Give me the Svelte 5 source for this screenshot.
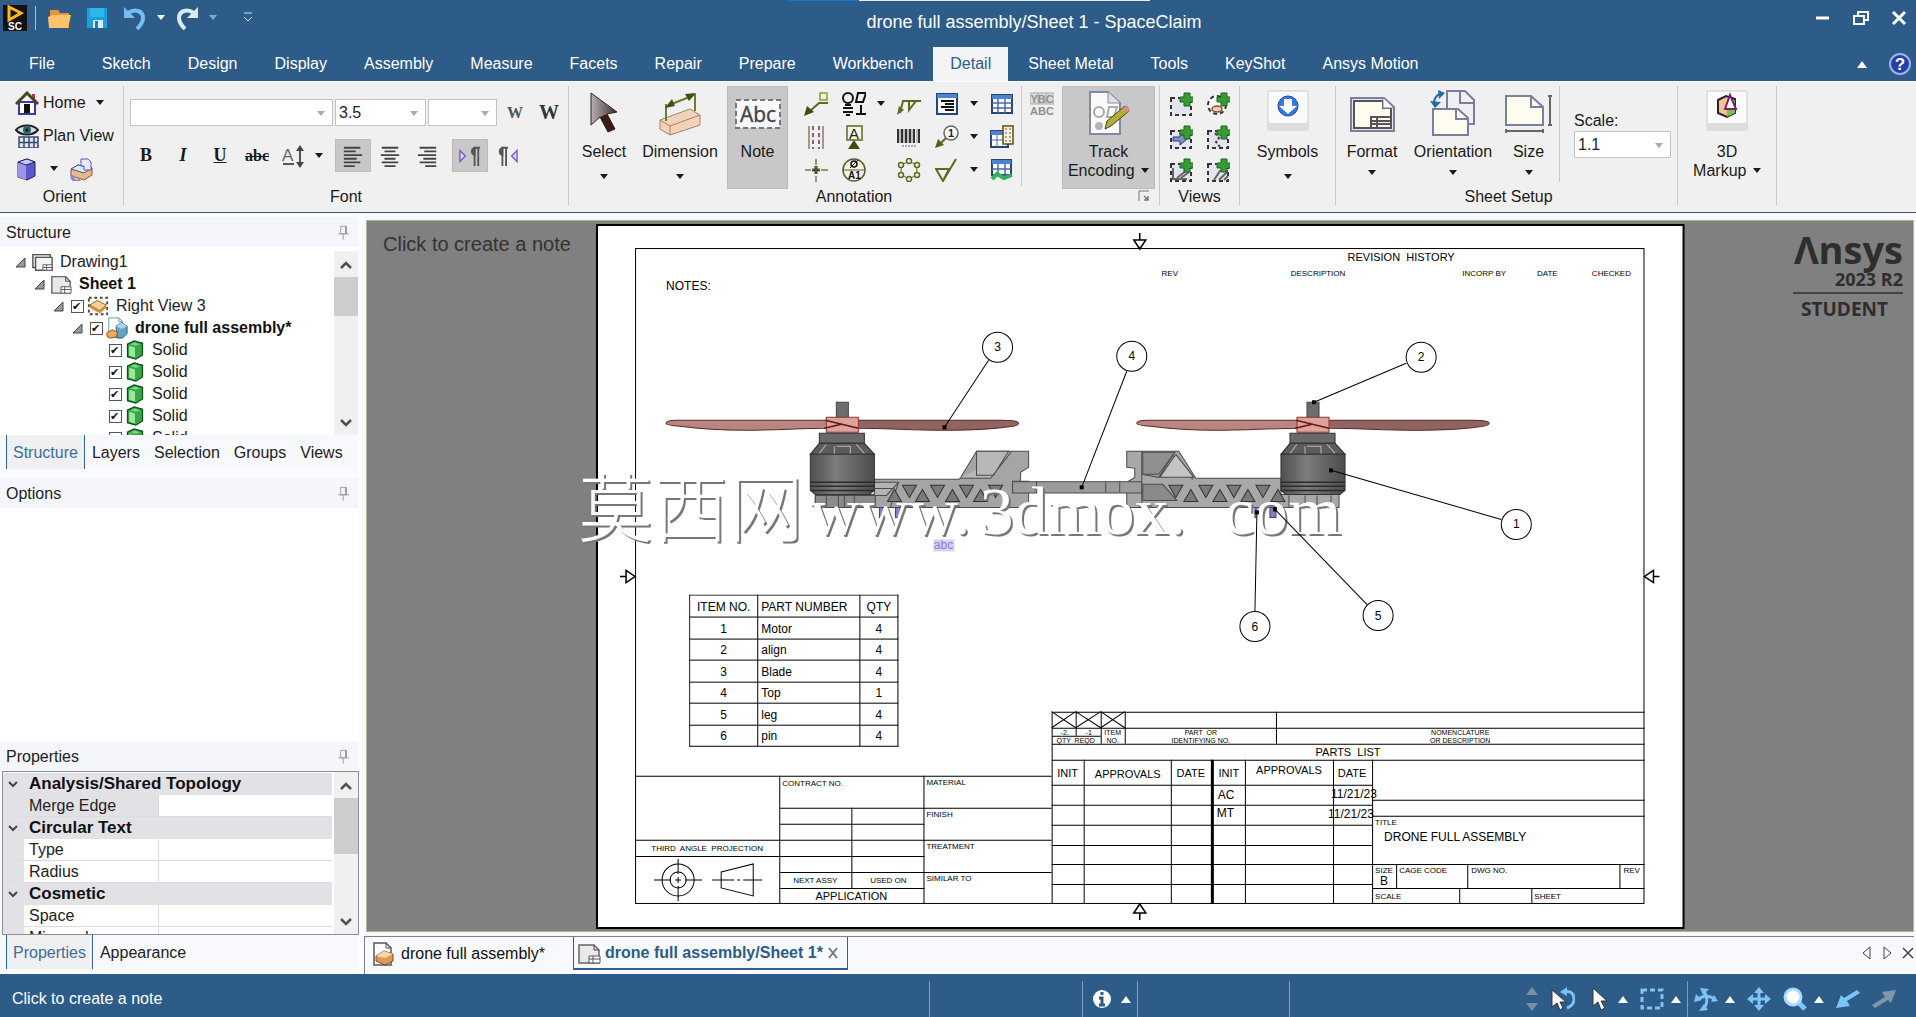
<script lang="ts">
  const ribbonTabs = [
    "Sketch", "Design", "Display", "Assembly", "Measure", "Facets", "Repair", "Prepare",
    "Workbench", "Detail", "Sheet Metal", "Tools", "KeyShot", "Ansys Motion",
  ];

  const tree = [
    { level: 0, icon: "drawing", text: "Drawing1", open: true },
    { level: 1, icon: "sheet", text: "Sheet 1", open: true, bold: true },
    { level: 2, icon: "view", text: "Right View 3", open: true, check: true },
    { level: 3, icon: "part", text: "drone full assembly*", open: true, check: true, bold: true },
    { level: 4, icon: "solid", text: "Solid", check: true },
    { level: 4, icon: "solid", text: "Solid", check: true },
    { level: 4, icon: "solid", text: "Solid", check: true },
    { level: 4, icon: "solid", text: "Solid", check: true },
    { level: 4, icon: "solid", text: "Solid", check: true },
  ];

  const properties = [
    { category: "Analysis/Shared Topology" },
    { name: "Merge Edge", selected: true },
    { category: "Circular Text" },
    { name: "Type" },
    { name: "Radius" },
    { category: "Cosmetic" },
    { name: "Space" },
    { name: "Mirrored" },
  ];

  const parts = [
    ["1", "Motor", "4"],
    ["2", "align", "4"],
    ["3", "Blade", "4"],
    ["4", "Top", "1"],
    ["5", "leg", "4"],
    ["6", "pin", "4"],
  ];

  const annotationTools = [
    ["noteLeader", "Note leader"], ["gdt", "Geometric tolerance"], ["caret", "More tolerances"],
    ["weld", "Weld symbol"], ["table", "Table"], ["caret", "More tables"], ["gridTable", "Bill of materials"],
    ["centerlines", "Centerlines"], ["datum", "Datum symbol"], ["", ""],
    ["barcode", "Barcode"], ["balloon", "Balloon"], ["caret", "More balloons"], ["holeTable", "Hole table"],
    ["centerMark", "Center mark"], ["datumTarget", "Datum target"], ["", ""],
    ["boltCircle", "Bolt circle"], ["finish", "Surface finish"], ["caret", "More finishes"], ["bendTable", "Bend table"],
  ];

  const viewTools = [
    ["viewGeneral", "General view"], ["viewDetail", "Detail view"],
    ["viewProjected", "Projected view"], ["viewBroken", "Broken view"],
    ["viewSection", "Section view"], ["viewBreakout", "Breakout view"],
  ];

  const balloons = [
    { n: 3, x: 999, y: 347, from: [990, 360], to: [946, 427] },
    { n: 4, x: 1133, y: 356, from: [1128, 371], to: [1083, 487] },
    { n: 2, x: 1422, y: 357, from: [1407, 363], to: [1315, 402] },
    { n: 1, x: 1517, y: 524, from: [1502, 519], to: [1332, 470] },
    { n: 5, x: 1379, y: 615, from: [1368, 604], to: [1276, 509] },
    { n: 6, x: 1256, y: 626, from: [1256, 611], to: [1258, 512] },
  ];

  // text on the drawing sheet: x, baseline, size, anchor, content
  const labels: [number, number, number, string, string][] = [
    [1402, 261, 11, "middle", "REVISION  HISTORY"],
    [1171, 276, 8, "middle", "REV"],
    [1319, 276, 8, "middle", "DESCRIPTION"],
    [1485, 276, 8, "middle", "INCORP BY"],
    [1548, 276, 8, "middle", "DATE"],
    [1612, 276, 8, "middle", "CHECKED"],
    [668, 290, 12, "start", "NOTES:"],
    [784, 785, 8, "start", "CONTRACT NO."],
    [928, 784, 8, "start", "MATERIAL"],
    [928, 816, 8, "start", "FINISH"],
    [928, 848, 8, "start", "TREATMENT"],
    [928, 880, 8, "start", "SIMILAR TO"],
    [709, 850, 8, "middle", "THIRD  ANGLE  PROJECTION"],
    [817, 882, 8, "middle", "NEXT ASSY"],
    [890, 882, 8, "middle", "USED ON"],
    [853, 899, 11, "middle", "APPLICATION"],
    [1066, 734, 7, "middle", "-2."],
    [1090, 734, 7, "middle", "-1"],
    [1114, 734, 7, "middle", "ITEM"],
    [1077, 742, 7, "middle", "QTY  REQD"],
    [1114, 742, 7, "middle", "NO."],
    [1202, 734, 7, "middle", "PART  OR"],
    [1202, 742, 7, "middle", "IDENTIFYING NO."],
    [1461, 734, 7, "middle", "NOMENCLATURE"],
    [1461, 742, 7, "middle", "OR DESCRIPTION"],
    [1349, 755, 11, "middle", "PARTS  LIST"],
    [1069, 776, 11, "middle", "INIT"],
    [1129, 777, 11, "middle", "APPROVALS"],
    [1192, 776, 11, "middle", "DATE"],
    [1230, 776, 11, "middle", "INIT"],
    [1290, 773, 11, "middle", "APPROVALS"],
    [1353, 776, 11, "middle", "DATE"],
    [1219, 798, 12, "start", "AC"],
    [1218, 816, 12, "start", "MT"],
    [1332, 797, 12, "start", "11/21/23"],
    [1329, 817, 12, "start", "11/21/23"],
    [1376, 824, 8, "start", "TITLE"],
    [1385, 840, 12, "start", "DRONE FULL ASSEMBLY"],
    [1376, 872, 8, "start", "SIZE"],
    [1381, 884, 12, "start", "B"],
    [1400, 872, 8, "start", "CAGE CODE"],
    [1472, 872, 8, "start", "DWG NO."],
    [1624, 872, 8, "start", "REV"],
    [1376, 898, 8, "start", "SCALE"],
    [1535, 898, 8, "start", "SHEET"],
  ];

  const downCells = [911, 939, 968, 997, 1177, 1207, 1235, 1264];
  const upCells = [896, 924, 954, 982, 1192, 1221, 1249, 1279];

  const plus = `<path d="M15 1h6v4h4v5h-4v4h-6v-4h-4V5h4z" fill="#3b9a35" stroke="#1c6420"/>`;
  const dashed = `<path d="M2 6h20v17H2z" fill="#e4e3f0" stroke="#333" stroke-width="2" stroke-dasharray="4 3"/>`;
  const pageFill = "#fdfcef";

  const icons: Record<string, string> = {
    folder: `<path d="M3 4h8l2 3h9v15H3z" fill="#e8953a"/><path d="M1 11l5-2h18l-3 13H2z" fill="#ffc46a"/>`,
    save: `<path d="M2 2h20v20H2z" fill="#1aa0dc"/><path d="M5 2h14v9H5z" fill="#2db6ec"/><path d="M8 14h10v8H8z" fill="#d6f0fb"/><path d="M10 15h3v7h-3z" fill="#1583b8"/>`,
    undo: `<path d="M5 7c7-5 15-2 15 5 0 5-3 8-6 11" fill="none" stroke="#76bdf5" stroke-width="4"/><path d="M1 1v11h11z" fill="#76bdf5"/>`,
    redo: `<path d="M19 7C12 2 4 5 4 12c0 5 3 8 6 11" fill="none" stroke="#dbe9f4" stroke-width="4"/><path d="M23 1v11H12z" fill="#dbe9f4"/>`,
    home: `<path d="M4 11h16v12H4z" fill="#fff" stroke="#3c3a9c" stroke-width="2"/><path d="M17 3h3v6h-3z" fill="#c33"/><path d="M1 13L12 2l11 11" fill="none" stroke="#404a1c" stroke-width="3"/><path d="M9 13h6v9H9z" fill="#111"/>`,
    plan: `<path d="M1 6c5-6 17-6 22 0-5 6-17 6-22 0z" fill="#cfe0e0" stroke="#222" stroke-width="2"/><circle cx="12" cy="6" r="4" fill="#2a6670"/><circle cx="12" cy="6" r="1.5" fill="#111"/><path d="M4 13h19v11H4z" fill="#dfe4ef"/><path d="M4 13h19v11H4zM9 13v11M14 13v11M19 13v11M4 18.500h19" fill="none" stroke="#3a4770" stroke-width="1.500"/>`,
    cube: `<path d="M3 5l9-3 8 3v14l-8 4-9-3z" fill="#5b57c8" stroke="#23206e"/><path d="M3 5l8 3v15l-8-3z" fill="#9a98e6"/><path d="M3 5l9-3 8 3-9 3z" fill="#c9c8f4" stroke="#23206e"/>`,
    orientView: `<path d="M2 12l7-4 14 3v7l-8 5-13-4z" fill="#e9b98a" stroke="#7e5b35"/><path d="M2 12l7-4 14 3-8 5z" fill="#cfeef5" stroke="#557"/><path d="M12 2h7l3 3v8h-7v-4h-3z" fill="#eceaff" stroke="#5a55b0"/><path d="M3 18a5 5 0 0 0 8 5" fill="none" stroke="#8a86d8" stroke-width="3"/>`,
    lineSpace: `<text x="0" y="17" font-size="17" fill="#666" font-family="Liberation Sans">A</text><path d="M1 20h11M18 5v15" stroke="#555" stroke-width="2"/><path d="M14 7l4-6 4 6zM14 18l4 6 4-6z" fill="#444"/>`,
    alignLeft: `<path d="M2 3h18M2 7h13M2 11h20M2 15h14M2 19h18M2 23h12" stroke="#444" stroke-width="2"/>`,
    alignCenter: `<path d="M3 3h18M6 7h12M2 11h20M6 15h12M3 19h18M6 23h12" stroke="#444" stroke-width="2"/>`,
    alignRight: `<path d="M4 3h18M9 7h13M2 11h20M8 15h14M4 19h18M10 23h12" stroke="#444" stroke-width="2"/>`,
    ltr: `<path d="M1 6l6 6-6 6z" fill="#dcd6f5" stroke="#7b5bc0" stroke-width="1.500"/><path d="M17 23V3h6M21 3v20" fill="none" stroke="#555" stroke-width="2"/><path d="M18 2v10a5 5 0 0 1 0-10z" fill="#555"/>`,
    rtl: `<path d="M23 6l-6 6 6 6z" fill="#dcd6f5" stroke="#7b5bc0" stroke-width="1.500"/><path d="M7 23V3h6M11 3v20" fill="none" stroke="#555" stroke-width="2"/><path d="M8 2v10a5 5 0 0 1 0-10z" fill="#555"/>`,
    noteLeader: `<path d="M16 1h7v7h-7z" fill="#eef3d0" stroke="#8a9a3a" stroke-width="1.500"/><path d="M24 11h-9l-9 8" fill="none" stroke="#5d6a20" stroke-width="2"/><path d="M0 24l3-10 7 6z" fill="#414a12"/>`,
    gdt: `<circle cx="6" cy="6" r="5" fill="none" stroke="#111" stroke-width="2"/><path d="M16 1h8l-3 9h-7zM1 16h10M1 20h10M3 13h6M4 23h4M14 22h10M19 22v-9" fill="none" stroke="#111" stroke-width="2"/>`,
    weld: `<path d="M24 9H6L3 21M12 9v9l7-9" fill="none" stroke="#5d6a20" stroke-width="2"/><path d="M0 23l2-9 5 4z" fill="#5d6a20"/>`,
    table: `<path d="M2 2h20v20H2z" fill="#fff" stroke="#27457a" stroke-width="2"/><path d="M2 2h20v4H2z" fill="#4d82d4"/><path d="M6 9h13M10 12h9M6 15h13M10 18h9" stroke="#111" stroke-width="2"/>`,
    gridTable: `<path d="M2 3h20v18H2z" fill="#fff" stroke="#27457a" stroke-width="2"/><path d="M2 3h20v4H2z" fill="#4d82d4"/><path d="M2 11h20M2 16h20M8 7v14M15 7v14" stroke="#4a6aa8" stroke-width="1.500"/>`,
    centerlines: `<path d="M5 1v23M19 1v23" stroke="#8a7a66" stroke-width="1.500"/><path d="M9 1v23M15 1v23" stroke="#93606a" stroke-width="2" stroke-dasharray="4 3"/>`,
    datum: `<path d="M5 1h15v14H5z" fill="#f6f6e4" stroke="#5d6a20" stroke-width="1.500"/><text x="7" y="14" font-size="15" fill="#222" font-family="Liberation Sans">A</text><path d="M12 15l6 9H6z" fill="#414a12"/>`,
    barcode: `<path d="M1 4v14M5 4v14M9 4v14M13 4v14M17 4v14M22 4v14" stroke="#333" stroke-width="2"/><path d="M3 4v14M7 4v14M11 4v14M15 4v14M20 4v14" stroke="#888"/><path d="M5 21h14" stroke="#aaa" stroke-width="2" stroke-dasharray="2 1"/>`,
    balloon: `<circle cx="16" cy="8" r="7" fill="#fff" stroke="#666" stroke-width="1.500"/><text x="13" y="12" font-size="11" font-weight="bold" fill="#222">1</text><path d="M11 13l-6 6" stroke="#5d6a20" stroke-width="2"/><path d="M0 23l3-9 6 6z" fill="#54601c"/>`,
    holeTable: `<path d="M1 6h17v16H1z" fill="#fff" stroke="#27457a" stroke-width="2"/><path d="M1 6h17v4H1z" fill="#4d82d4"/><path d="M1 15h17M7 10v12" stroke="#4a6aa8"/><path d="M13 1h10v18H13z" fill="#fbf4d8" stroke="#5b4a14" stroke-width="1.500"/><path d="M16 3v14M20 3v14" stroke="#555" stroke-dasharray="2 2"/>`,
    centerMark: `<path d="M12 1v6M12 18v6M1 12h6M17 12h7" stroke="#8a9a7a" stroke-width="2"/><path d="M12 8v8M8 12h8" stroke="#4a5a2a" stroke-width="3"/>`,
    datumTarget: `<circle cx="12" cy="12" r="11" fill="#f5f5e6" stroke="#555d2a" stroke-width="1.500"/><path d="M1 12h22" stroke="#555d2a"/><circle cx="12" cy="6" r="3" fill="none" stroke="#111" stroke-width="1.500"/><path d="M8 10l8-8" stroke="#111"/><text x="6" y="21" font-size="10" font-weight="bold" fill="#111" font-family="Liberation Sans">A1</text>`,
    boltCircle: `<circle cx="12" cy="12" r="8" fill="none" stroke="#5d6a20"/><g fill="#f5f5e6" stroke="#5d6a20" stroke-width="1.500"><circle cx="12" cy="3" r="2.500"/><circle cx="20" cy="7" r="2.500"/><circle cx="20" cy="17" r="2.500"/><circle cx="12" cy="21" r="2.500"/><circle cx="4" cy="17" r="2.500"/><circle cx="4" cy="7" r="2.500"/></g>`,
    finish: `<path d="M1 11h13L8 23zM8 23L21 1" fill="none" stroke="#5d6a20" stroke-width="2"/>`,
    bendTable: `<path d="M2 2h19v15H2z" fill="#fff" stroke="#27457a" stroke-width="2"/><path d="M2 2h19v4H2z" fill="#4d82d4"/><path d="M2 11h19M8 6v11M15 6v11" stroke="#4a6aa8" stroke-width="1.500"/><path d="M2 21l5-5 7 4 8-3" fill="none" stroke="#2fb457" stroke-width="4"/>`,
    viewGeneral: dashed + plus,
    viewDetail: `<circle cx="11" cy="13" r="9" fill="#fff" stroke="#333" stroke-width="2" stroke-dasharray="4 3"/><ellipse cx="11" cy="17" rx="5" ry="3" fill="#f2cdb5" stroke="#7a5238" stroke-width="1.500"/>` + plus,
    viewProjected: dashed + `<path d="M4 12h7V8l7 6-7 6v-4H4z" fill="#8794c8" stroke="#2c3570"/>` + plus,
    viewBroken: dashed + `<path d="M9 8l4 5-3 4 4 5" fill="none" stroke="#444" stroke-width="2" stroke-dasharray="3 2"/>` + plus,
    viewSection: dashed + `<path d="M4 10v11h14M8 20l10-8M12 20l8-6" fill="none" stroke="#666" stroke-width="2"/>` + plus,
    viewBreakout: dashed + `<path d="M8 22l6-9h8M13 22l8-8M18 22l4-4" fill="none" stroke="#666" stroke-width="2"/>` + plus,
    drawing: `<path d="M2 4h19v14H2z" fill="#e6e6e6" stroke="#555" stroke-width="1.500"/><path d="M5 7h18v14H5z" fill="#f4f4f4" stroke="#555" stroke-width="1.500"/><path d="M13 15h10v6H13zM13 18h10M17 15v6" fill="#fff" stroke="#555"/>`,
    sheet: `<path d="M2 4h15l5 5v13H2z" fill="#e9e9e9" stroke="#666" stroke-width="1.500"/><path d="M17 4v5h5" fill="none" stroke="#444"/><path d="M12 15h11v7H12zM12 18h11M16 15v7" fill="#fff" stroke="#555"/>`,
    view: `<path d="M2 3h20v18H2z" fill="#f6f3ee" stroke="#444" stroke-width="2" stroke-dasharray="3 3"/><path d="M3 11l8-5 10 5-7 6z" fill="#f8cf98" stroke="#8a5a1c"/><path d="M3 11v3l11 6v-3zM21 11v3l-7 6v-3z" fill="#d48b3c"/>`,
    part: `<path d="M3 1h11l4 4v17H3z" fill="#fff" stroke="#59a"/><path d="M14 1v4h4" fill="none" stroke="#59a"/><path d="M11 10l6-4 6 4v8l-5 5h-6z" fill="#5ea5c4" stroke="#235a78"/><path d="M11 10l6-4 6 4-6 3z" fill="#a9d6e6"/><path d="M1 17l6-3 6 3-2 5-7 1-3-2z" fill="#f0a962" stroke="#7a4a1a"/>`,
    docPart: `<path d="M3 1h12l5 5v17H3z" fill="#fff" stroke="#555" stroke-width="1.500"/><path d="M15 1v5h5" fill="none" stroke="#555"/><path d="M5 14l8-5 9 3v7l-8 4-9-4z" fill="#dc9a57" stroke="#7b4b1c"/><path d="M5 14l8-5 9 3-8 4z" fill="#f8d6ad"/>`,
    solid: `<path d="M3 5l8-4 10 3v14l-8 5-10-3z" fill="#35a844" stroke="#0b4f14" stroke-width="1.500"/><path d="M5 7l7 2v12l-7-2z" fill="#9de5a0"/><path d="M6 5l6-2 6 2-5 2z" fill="#7fd486"/>`,
    pin: `<path d="M8 4h7v9H8zM5 13h13M11 13v7" fill="none" stroke="#a0a0a0" stroke-width="1.200"/><path d="M14 4v9" stroke="#999" stroke-width="1.500"/>`,
    marquee: `<path d="M2 3h20v18H2z" fill="none" stroke="#7cc3f7" stroke-width="3" stroke-dasharray="5 3"/>`,
    pan: `<path d="M12 4v16M4 12h16" stroke="#7cc3f7" stroke-width="3"/><path d="M12 0l5 6H7zM12 24l5-6H7zM0 12l6-5v10zM24 12l-6-5v10z" fill="#7cc3f7"/>`,
    spin: `<path d="M3 13c6-5 13-5 18 0M9 4c5 4 5 14 0 18" fill="none" stroke="#7cc3f7" stroke-width="3"/><path d="M0 15l2-8 6 6zM24 14l-7 1 3-7zM6 1l9 1-6 6zM5 24l9-1-4-6z" fill="#7cc3f7"/>`,
    zoom: `<path d="M15 15l7 7" stroke="#7cc3f7" stroke-width="5"/><circle cx="10" cy="10" r="8" fill="#fff" stroke="#a8dbff" stroke-width="3"/>`,
    prev: `<path d="M24 6L11 14l3 5-14 2 5-13 3 3 13-8z" fill="#7cc3f7"/>`,
    next: `<path d="M0 18L13 10l-3-5 14-2-5 13-3-3-13 8z" fill="#8197a8"/>`,
    cursor: `<path d="M6 1v18l5-4 3 8 4-2-4-7h6z" fill="#fff" stroke="#333"/>`,
    cursorUndo: `<path d="M13 5c7-2 10 2 10 7s-4 8-7 9" fill="none" stroke="#7cc3f7" stroke-width="3"/><path d="M16 0v9l-7-4z" fill="#7cc3f7"/><path d="M1 3v17l5-4 3 7 3-2-3-6h6z" fill="#fff" stroke="#333"/>`,
    info: `<circle cx="12" cy="12" r="9" fill="#fff"/><path d="M12 5v3M9 11h3v7M9 18h6" fill="none" stroke="#2c5c87" stroke-width="3"/>`,
  };

  let scale = $state("1.1");
  let textSize = $state("3.5");
</script>

{#snippet icon(name: string, size = 24)}
  <svg class="icon" width={size} height={size} viewBox="0 0 24 24" aria-hidden="true">{@html icons[name]}</svg>
{/snippet}

{#snippet caret()}
  <svg class="caret" width="8" height="5" viewBox="0 0 8 5" aria-hidden="true"><path d="M0 0h8L4 5z" fill="currentColor" /></svg>
{/snippet}

{#snippet up()}
  <svg class="caret" width="10" height="7" viewBox="0 0 10 7" aria-hidden="true"><path d="M0 7h10L5 0z" fill="#fff" /></svg>
{/snippet}

{#snippet scrollbar(thumb: string)}
  <div class="scrollbar {thumb}">
    <svg width="12" height="8" viewBox="0 0 12 8"><path d="M1 7l5-5 5 5" fill="none" stroke="#505050" stroke-width="2.500" /></svg>
    <div class="thumb"></div>
    <svg width="12" height="8" viewBox="0 0 12 8"><path d="M1 1l5 5 5-5" fill="none" stroke="#505050" stroke-width="2.500" /></svg>
  </div>
{/snippet}

{#snippet motor()}
  <path d="M838 402h12v16h-12z" fill="#6d6d6d" stroke="#444" />
  <path d="M668 423q0-3 10-3h152v8c-30 0-50 2-83 2-30 0-50-2-65-4q-14-1-14-3z" fill="#b98580" stroke="#5d2725" />
  <path d="M859 420h145q16 0 16 3t-14 4c-20 3-40 3-60 3-30 0-60-2-87-2z" fill="#8f6461" stroke="#5d2725" />
  <path d="M828 417h32v15h-32z" fill="#dba29e" stroke="#8b3532" />
  <path d="M827 420l33 8M826 428l17-4" stroke="#6d1512" stroke-width="1.500" fill="none" />
  <path d="M821 433h45v10h-45z" fill="#6a6a6a" stroke="#333" />
  <path d="M821 443h45l10 11h-64z" fill="#5c5c5c" stroke="#2e2e2e" />
  <path d="M828 444l-7 9M836 446v8M838 446h14v7M852 446v8M858 444l8 9" stroke="#b5b5b5" fill="none" />
  <path d="M812 454h64v36l-5 4h-54l-5-4z" fill="url(#barrel)" stroke="#333" />
  <path d="M812 482h64M812 486h64M812 490h64" stroke="#2b2b2b" stroke-width="1.500" />
{/snippet}

<div class="app">
  <header>
    <div class="titlebar">
      <div class="quick">
        <svg class="logo" width="24" height="26" viewBox="0 0 24 26" aria-label="SpaceClaim">
          <path d="M0 0h24v26H0z" fill="#111" />
          <path d="M6 2l12 6-12 7z" fill="none" stroke="#ffb71b" stroke-width="3" />
          <text x="12" y="25" font-size="10" font-weight="bold" fill="#fff" text-anchor="middle">SC</text>
        </svg>
        <span class="divider"></span>
        <button aria-label="Open">{@render icon("folder")}</button>
        <button aria-label="Save">{@render icon("save")}</button>
        <button aria-label="Undo">{@render icon("undo")}</button>
        <button class="thin" aria-label="Undo history">{@render caret()}</button>
        <button aria-label="Redo">{@render icon("redo")}</button>
        <button class="thin dim" aria-label="Redo history">{@render caret()}</button>
        <button class="more" aria-label="Customize toolbar">
          <svg width="10" height="12" viewBox="0 0 10 12"><path d="M1 1h8M1 5l4 4 4-4" fill="none" stroke="#cfe0ee" stroke-width="1" /></svg>
        </button>
      </div>
      <h1>drone full assembly/Sheet 1 - SpaceClaim</h1>
      <div class="window">
        <button aria-label="Minimize"><svg width="16" height="16" viewBox="0 0 16 16"><path d="M1 8h13" stroke="#fff" stroke-width="3" /></svg></button>
        <button aria-label="Restore"><svg width="16" height="16" viewBox="0 0 16 16"><path d="M1 6h10v8H1zM5 5V2h10v8h-3" fill="none" stroke="#fff" stroke-width="2" /></svg></button>
        <button aria-label="Close"><svg width="16" height="16" viewBox="0 0 16 16"><path d="M2 2l12 12M14 2L2 14" stroke="#fff" stroke-width="3" /></svg></button>
      </div>
      <div class="progress"></div>
    </div>
    <nav class="ribbon-tabs">
      <button class="file">File</button>
      {#each ribbonTabs as tab}
        <button class:active={tab === "Detail"}>{tab}</button>
      {/each}
      <div class="help">
        <button aria-label="Collapse ribbon">{@render up()}</button>
        <button aria-label="Help">
          <svg width="24" height="24" viewBox="0 0 24 24">
            <circle cx="12" cy="12" r="10" fill="#2240a8" stroke="#9fb4e0" stroke-width="2" />
            <text x="12" y="18" font-size="17" font-weight="bold" fill="#fff" text-anchor="middle">?</text>
          </svg>
        </button>
      </div>
    </nav>
  </header>

  <section class="ribbon">
    <div class="group orient">
      <div class="body">
        <button class="line">{@render icon("home")}Home <span class="push">{@render caret()}</span></button>
        <button class="line">{@render icon("plan")}Plan View</button>
        <div class="line">
          <button aria-label="Rotate view">{@render icon("cube")}</button>
          <button aria-label="View list" class="thin">{@render caret()}</button>
          <button aria-label="Snap view">{@render icon("orientView")}</button>
        </div>
      </div>
      <div class="caption">Orient</div>
    </div>

    <div class="group font">
      <div class="body">
        <div class="combos">
          <label class="combo family"><select aria-label="Font family"><option></option></select>{@render caret()}</label>
          <label class="combo size"><select aria-label="Font size" bind:value={textSize}><option>3.5</option></select>{@render caret()}</label>
          <label class="combo unit"><select aria-label="Units"><option></option></select>{@render caret()}</label>
          <button class="narrow-w">W</button>
          <button class="wide-w">W</button>
        </div>
        <div class="formats">
          <button class="serif bold">B</button>
          <button class="serif italic">I</button>
          <button class="serif underline">U</button>
          <button class="serif strike">abc</button>
          <button aria-label="Line spacing">{@render icon("lineSpace")}</button>
          <button class="thin" aria-label="Spacing options">{@render caret()}</button>
          <button class="on gap" aria-label="Align left">{@render icon("alignLeft", 22)}</button>
          <button aria-label="Align center">{@render icon("alignCenter", 22)}</button>
          <button aria-label="Align right">{@render icon("alignRight", 22)}</button>
          <button class="on para" aria-label="Left to right">{@render icon("ltr", 22)}</button>
          <button aria-label="Right to left">{@render icon("rtl", 22)}</button>
        </div>
      </div>
      <div class="caption">Font</div>
    </div>

    <div class="group annotation">
      <div class="body row">
        <button class="big select">
          <svg width="48" height="46" viewBox="0 0 48 46"><path d="M11 3l26 19-10 2 8 15-7 3-8-15-9 8z" fill="url(#pointer)" stroke="#31231f" /><path d="M20 27l7-3 8 15-7 3z" fill="#3a1c14" /></svg>
          <span>Select</span>{@render caret()}
        </button>
        <button class="big dimension">
          <svg width="48" height="46" viewBox="0 0 48 46"><path d="M4 30L34 19l10 6v10L14 45 4 39z" fill="#f3d3b8" stroke="#a8806a" /><path d="M4 30l10 6 30-11M14 36v9" fill="none" stroke="#a8806a" /><path d="M10 14v17M39 4v17M13 15L36 6" stroke="#6f7d2a" stroke-width="2" /><path d="M9 18l7-9 3 7zM40 3l-11 1 4 7z" fill="#414f12" /></svg>
          <span>Dimension</span>{@render caret()}
        </button>
        <button class="big note on">
          <svg width="48" height="46" viewBox="0 0 48 46"><path d="M2 10h44v28H2z" fill="#f8f8ff" stroke="#777" stroke-width="2" stroke-dasharray="5 3" /><text x="24" y="32" font-size="21" fill="#444" stroke="#444" stroke-width=".4" font-family="Open Sans, sans-serif" text-anchor="middle">Abc</text></svg>
          <span>Note</span>
        </button>
        <div class="tools">
          {#each annotationTools as [name, title]}
            {#if name === "caret"}
              <button class="thin" aria-label={title}>{@render caret()}</button>
            {:else if name}
              <button aria-label={title}>{@render icon(name)}</button>
            {:else}
              <span></span>
            {/if}
          {/each}
        </div>
        <button class="track-small" aria-label="Show encoding">
          <svg width="24" height="26" viewBox="0 0 24 26"><path d="M0 2h24v11H0z" fill="#ddd" stroke="#aaa" /><path d="M8 2v11M16 2v11" stroke="#aaa" /><g font-family="Liberation Sans" font-size="11" font-weight="bold" fill="#8f8f8f" text-anchor="middle"><text x="12" y="12">YBC</text><text x="12" y="24">ABC</text></g></svg>
        </button>
        <button class="big track on">
          <svg width="48" height="46" viewBox="0 0 48 46"><path d="M5 2h18l12 11v31H5z" fill="#fafafa" stroke="#8588a5" stroke-width="2" /><path d="M23 2v11h12" fill="#dfe0ee" stroke="#8588a5" /><circle cx="14" cy="22" r="5" fill="none" stroke="#aaa" stroke-width="2" /><path d="M24 17h8l-3 10h-7z" fill="none" stroke="#aaa" stroke-width="2" /><circle cx="14" cy="36" r="4" fill="#b5b5b5" /><path d="M20 39l2-8 18-15 4 5-18 15z" fill="#b3ad3c" stroke="#44430f" /><path d="M38 18l4-3 3 5-3 3z" fill="#d88" /></svg>
          <span>Track<br />Encoding <i>{@render caret()}</i></span>
        </button>
      </div>
      <div class="caption">Annotation
        <svg class="launcher" width="12" height="12" viewBox="0 0 12 12"><path d="M1 11V1h10" fill="none" stroke="#777" /><path d="M6 6l4 4M10 6v4H6" stroke="#777" stroke-width="1.500" fill="none" /></svg>
      </div>
    </div>

    <div class="group views">
      <div class="body">
        <div class="view-tools">
          {#each viewTools as [name, title]}
            <button aria-label={title}>{@render icon(name)}</button>
          {/each}
        </div>
      </div>
      <div class="caption">Views</div>
    </div>

    <div class="group symbols">
      <div class="body row">
        <button class="big">
          <svg width="48" height="46" viewBox="0 0 48 46"><path d="M4 1h40v39H4z" fill="#fafafa" stroke="#ccc" /><path d="M4 33h40v7H4z" fill="#ddd" /><circle cx="24" cy="16" r="10" fill="#3478e0" stroke="#2044a8" /><path d="M20 9h8v7h5l-9 8-9-8h5z" fill="#fff" /></svg>
          <span>Symbols</span>{@render caret()}
        </button>
      </div>
      <div class="caption"></div>
    </div>

    <div class="group setup">
      <div class="body row">
        <button class="big format">
          <svg width="48" height="46" viewBox="0 0 48 46"><path d="M3 8h33l10 9v24H3z" fill="#e5e6f2" stroke="#7b7f9e" stroke-width="2" /><path d="M6 11h29v7h8v20H6z" fill={pageFill} stroke="#555" stroke-width="2" /><path d="M35 8v10h10" fill="#fff" stroke="#7b7f9e" /><path d="M23 27h20v11H23zM23 31h20M23 34h20M29 27v11" fill="none" stroke="#555" stroke-width="2" /></svg>
          <span>Format</span>{@render caret()}
        </button>
        <button class="big orientation">
          <svg width="48" height="46" viewBox="0 0 48 46"><path d="M18 1h18l9 9v24H18z" fill="#f0f0f4" stroke="#7b7f9e" stroke-width="2" /><path d="M31 1v12h13" fill="none" stroke="#7b7f9e" stroke-width="2" /><path d="M4 19h25l10 9v17H4z" fill={pageFill} stroke="#7b7f9e" stroke-width="2" /><path d="M27 19v10h11" fill="none" stroke="#7b7f9e" stroke-width="2" /><path d="M5 14Q5 5 12 4" fill="none" stroke="#236ca0" stroke-width="2" /><path d="M1 11l5 7 6-6zM9 0l7 3-6 6z" fill="#236ca0" /></svg>
          <span>Orientation</span>{@render caret()}
        </button>
        <button class="big page">
          <svg width="48" height="46" viewBox="0 0 48 46"><path d="M1 6h25l12 11v18H1z" fill={pageFill} stroke="#7b7f9e" stroke-width="2" /><path d="M26 6v11h12" fill="none" stroke="#7b7f9e" stroke-width="2" /><path d="M45 6v29M43 6h4M43 35h4M1 41h37M1 39v4M38 39v4" stroke="#666" stroke-width="2" /></svg>
          <span>Size</span>{@render caret()}
        </button>
        <div class="scale">
          <label for="scale">Scale:</label>
          <div class="combo"><select id="scale" bind:value={scale}><option>1.1</option></select>{@render caret()}</div>
        </div>
      </div>
      <div class="caption">Sheet Setup</div>
    </div>

    <div class="group markup">
      <div class="body row">
        <button class="big">
          <svg width="48" height="46" viewBox="0 0 48 46"><path d="M4 1h40v39H4z" fill="#fafafa" stroke="#ccc" /><path d="M4 33h40v7H4z" fill="#ddd" /><path d="M15 10l8-4 9 3v14l-8 4-9-4z" fill="#f2c78c" stroke="#223" stroke-width="2" /><path d="M24 13l8-3v13l-8 4z" fill="#7bc04a" /><path d="M27 5l6 14H22z" fill="#fff" stroke="#7a1c7c" stroke-width="2" /></svg>
          <span>3D<br />Markup <i>{@render caret()}</i></span>
        </button>
      </div>
      <div class="caption"></div>
    </div>
  </section>

  <div class="workspace">
    <aside>
      <div class="panel-title">Structure {@render icon("pin", 20)}</div>
      <div class="tree-wrap">
        <ul class="tree">
          {#each tree as row, i}
            <li style:padding-left="{15 + row.level * 19}px">
              <svg width="11" height="11" viewBox="0 0 11 11" aria-hidden="true">{#if row.open}<path d="M10 1v9H1z" fill="#999" stroke="#444" />{/if}</svg>
              {#if row.check}<input type="checkbox" id="node-{i}" checked />{/if}
              {@render icon(row.icon, row.level > 3 ? 20 : 22)}
              {#if row.check}
                <label for="node-{i}" class:strong={row.bold}>{row.text}</label>
              {:else}
                <span class:strong={row.bold}>{row.text}</span>
              {/if}
            </li>
          {/each}
        </ul>
        {@render scrollbar("upper")}
      </div>
      <div class="panel-tabs">
        <button class="active">Structure</button><button>Layers</button><button>Selection</button><button>Groups</button><button>Views</button>
      </div>
      <div class="panel-title options">Options {@render icon("pin", 20)}</div>
      <div class="blank"></div>
      <div class="panel-title">Properties {@render icon("pin", 20)}</div>
      <div class="props">
        <div class="prop-rows">
          {#each properties as p}
            {#if p.category}
              <div class="category">
                <svg width="10" height="7" viewBox="0 0 10 7"><path d="M1 1l4 4 4-4" fill="none" stroke="#444" stroke-width="2" /></svg>
                {p.category}
              </div>
            {:else}
              <label class="prop" class:selected={p.selected}>
                <span>{p.name}</span>
                <input type="text" />
              </label>
            {/if}
          {/each}
        </div>
        {@render scrollbar("lower")}
      </div>
      <div class="panel-tabs"><button class="active">Properties</button><button>Appearance</button></div>
    </aside>

    <main>
      <div class="canvas">
        <p class="hint">Click to create a note</p>
        <svg class="sheet" viewBox="598 224 1087 704">
          <defs>
            <linearGradient id="barrel"><stop offset="0" stop-color="#505050" /><stop offset=".4" stop-color="#7c7c7c" /><stop offset="1" stop-color="#4c4c4c" /></linearGradient>
            <linearGradient id="pointer"><stop offset="0" stop-color="#b9aeb0" /><stop offset="1" stop-color="#3f302e" /></linearGradient>
          </defs>
          <rect x="599" y="225" width="1085" height="702" fill="#fff" stroke="#000" stroke-width="2" />
          <rect x="637.500" y="248.500" width="1007" height="654" fill="none" stroke="#000" />

          <g fill="none" stroke="#000" stroke-width="1.500">
            <path d="M1141 233v7M1135 240h12l-6 9zM1141 919v-7M1135 912h12l-6-9zM622 576h6M628 570v12l9-6zM1660 576h-6M1654 570v12l-9-6z" />
          </g>

          <g stroke="#4b4b4b">
            <path d="M876 479h85l17-28h52v16l-8 5v10l8 3v22H817v-13h59z" fill="#a5a5a5" />
            <path d="M817 495h60v12h-60z" fill="#8b8b8b" />
            <path d="M828 495v12M840 495v12M846 495v12M856 495v12" />
            <path d="M978 451v24h17l15-24zM961 478h31l21-27" fill="#b7b7b7" />
            <path d="M876 482h24l-12 13h-12zM900 482l-8 25M876 488h20" fill="#b4b4b4" />
            <path d="M1014 481h16v11h-16z" fill="#aaa" />
            <path d="M1128 451h52l17 27h85v16h58v13h-212v-25l8-5v-9l-8-1z" fill="#a8a8a8" />
            <path d="M1143 451v56M1143 474l17 3 14-22 20 24" fill="none" />
            <path d="M1144 452h32l-16 22h-16z" fill="#8f8f8f" />
            <path d="M1177 454l18 23h-34z" fill="#c4c4c4" />
            <path d="M1144 484h20l14 16h-34z" fill="#8a8a8a" />
            <path d="M1290 495v12M1306 495v12M1318 495v12M1332 495v12" />
            <path d="M1014 481.500h129v11h-129z" fill="#9c9c9c" />
            <path d="M1038 481v11M1107 481v11M1121 481v11" />
          </g>
          <g fill="#7a7a7a" stroke="#333">
            {#each downCells as x}
              <path d="M{x - 7} 485h14l-7 12z" />
            {/each}
            {#each upCells as x}
              <path d="M{x - 7} 501h14l-7-12z" />
            {/each}
          </g>
          <path d="M881 507h6v10h-6zM897 507h6v10h-6zM1256 507h5v10h-5zM1271 507h6v10h-6z" fill="#8184bb" stroke="#3b3e7c" />
          {@render motor()}
          <g transform="translate(470 0)">{@render motor()}</g>

          <g class="watermark">
            <text x="580" y="536" class="han">莫西网</text>
            <text x="812" y="534">www.</text>
            <text x="981" y="534">3dmox.</text>
            <text x="1225" y="534">com</text>
          </g>

          <rect x="935" y="539" width="21" height="12" fill="#d9d2f5" />
          <text x="945" y="549" font-size="12" fill="#8a80d0" text-anchor="middle">abc</text>

          {#each balloons as b}
            <path d="M{b.from[0]} {b.from[1]}L{b.to[0]} {b.to[1]}" stroke="#000" />
            <rect x={b.to[0] - 2} y={b.to[1] - 2} width="4" height="4" />
            <circle cx={b.x} cy={b.y} r="15" fill="#fff" stroke="#000" />
            <text x={b.x} y={b.y + 4} font-size="12" text-anchor="middle">{b.n}</text>
          {/each}

          <foreignObject x="691" y="594" width="210" height="153">
            <table class="parts">
              <thead><tr><th>ITEM NO.</th><th>PART NUMBER</th><th>QTY</th></tr></thead>
              <tbody>
                {#each parts as part}
                  <tr>{#each part as cell}<td>{cell}</td>{/each}</tr>
                {/each}
              </tbody>
            </table>
          </foreignObject>

          <g fill="none" stroke="#000">
            <path d="M637 775.500H1053M782 807.500H1053M782 823.500H926M637 839.500H1053M637 855.500H926M782 871.500H1053M782 887.500H926" />
            <path d="M781.500 775V903M925.500 775V903M853.500 807V887" />
            <path d="M1053.500 903V711.500H1645M1053 727.500H1645M1053 743.500H1645M1053 759.500H1645M1053 735.500H1102" />
            <path d="M1077.500 711V735M1102.500 711V743M1126.500 711V743M1277.500 711V743" />
            <path d="M1053 711l24 16M1077 711l-24 16M1077 711l25 16M1102 711l-25 16M1102 711l24 16M1126 711l-24 16" />
            <path d="M1053 784.500H1373M1053 804.500H1373M1053 824.500H1373M1053 844.500H1373M1053 863.500H1645M1053 883.500H1373" />
            <path d="M1085.500 759V903M1172.500 759V903M1246.500 759V903M1334.500 759V903M1373.500 759V903" />
            <path d="M1213.500 759V903" stroke-width="3" />
            <path d="M1373 799.500H1645M1373 815.500H1645M1373 887.500H1645M1397.500 863V887M1468.500 863V887M1620.500 863V887M1460.500 887V903M1532.500 887V903" />
            <circle cx="680" cy="879" r="16" /><circle cx="680" cy="879" r="8" />
            <path d="M656 879h17M677 879h6M687 879h17M680 858v15M680 876v6M680 885v15" />
            <path d="M723 871l32-8v32l-32-8zM714 879h22M739 879h3M745 879h19" />
          </g>
          {#each labels as [x, y, size, anchor, text]}
            <text {x} {y} font-size={size} text-anchor={anchor}>{text}</text>
          {/each}
        </svg>
        <div class="brand">
          <strong>Λnsys</strong>
          <b>2023 R2</b>
          <hr />
          <em>STUDENT</em>
        </div>
      </div>
      <div class="doc-tabs">
        <button>{@render icon("docPart")}drone full assembly*</button>
        <div class="doc active">
          {@render icon("sheet")}<button>drone full assembly/Sheet 1*</button>
          <button aria-label="Close sheet"><svg width="12" height="12" viewBox="0 0 12 12"><path d="M2 1l8 10M10 1L2 11" stroke="#777" stroke-width="2" /></svg></button>
        </div>
        <div class="doc-nav">
          <button aria-label="Previous document"><svg width="10" height="14" viewBox="0 0 10 14"><path d="M8 1v12L1 7z" fill="none" stroke="#444" /></svg></button>
          <button aria-label="Next document"><svg width="10" height="14" viewBox="0 0 10 14"><path d="M2 1v12l7-6z" fill="none" stroke="#444" /></svg></button>
          <button aria-label="Close document"><svg width="12" height="12" viewBox="0 0 12 12"><path d="M1 1l10 10M11 1L1 11" stroke="#444" stroke-width="1.500" /></svg></button>
        </div>
      </div>
    </main>
  </div>

  <footer>
    <span class="message">Click to create a note</span>
    <span class="cell wide"></span>
    <button class="cell info">{@render icon("info")}{@render up()}</button>
    <span class="cell last"></span>
    <span class="cell rest"></span>
    <div class="tray">
      <button class="spin" aria-label="Step"><svg width="14" height="26" viewBox="0 0 14 26"><path d="M1 9l6-8 6 8zM1 17l6 8 6-8z" fill="#7890a4" /></svg></button>
      <button aria-label="Revert selection">{@render icon("cursorUndo")}</button>
      <button aria-label="Select">{@render icon("cursor")}{@render up()}</button>
      <button aria-label="Box select">{@render icon("marquee")}{@render up()}</button>
      <button class="line-left" aria-label="Spin">{@render icon("spin")}{@render up()}</button>
      <button aria-label="Pan">{@render icon("pan")}</button>
      <button aria-label="Zoom">{@render icon("zoom")}{@render up()}</button>
      <button aria-label="Previous view">{@render icon("prev")}</button>
      <button aria-label="Next view">{@render icon("next")}</button>
    </div>
  </footer>
</div>

<style>
  :global(body) {
    margin: 0;
  }

  .app {
    --blue: #2c5c87;
    display: flex;
    flex-direction: column;
    height: 100vh;
    overflow: hidden;
    font: 16px/20px "Liberation Sans", Arial, sans-serif;
    color: #222;
    background: #f8f9fd;
  }

  button {
    border: 0;
    padding: 0;
    background: none;
    font: inherit;
    color: inherit;
    display: flex;
    align-items: center;
    justify-content: center;
  }

  svg {
    flex: none;
  }

  header {
    background: var(--blue);
    color: #fff;
    height: 81px;
    flex: none;
  }

  .titlebar {
    position: relative;
    display: flex;
    justify-content: space-between;
    align-items: center;
    height: 35px;
  }

  /* thin strip along the top edge of the window */
  .progress {
    position: absolute;
    top: 0;
    left: 41%;
    width: 19%;
    height: 1px;
    background: linear-gradient(90deg, #0f78d4 20%, #e8eef4 20%);
  }

  .quick {
    display: flex;
    align-items: center;
    width: 420px;
    padding-left: 3px;
  }

  .quick .divider {
    width: 1px;
    height: 24px;
    margin: 0 4px 0 8px;
    background: #a9c3da;
  }

  .quick button {
    width: 38px;
  }

  .quick .thin {
    width: 14px;
  }

  .quick .dim {
    color: #89a7c0;
  }

  .quick .more {
    width: 56px;
  }

  h1 {
    font-size: 18px;
    font-weight: normal;
    margin: 8px 0 0 6px;
  }

  .window {
    display: flex;
    gap: 22px;
    width: 268px;
    justify-content: flex-end;
    padding-right: 9px;
  }

  .ribbon-tabs {
    display: flex;
    gap: 3px;
    height: 46px;
  }

  .ribbon-tabs button {
    height: 34px;
    margin-top: 12px;
    padding: 0 17px;
  }

  .ribbon-tabs .file {
    padding: 0 27px 0 29px;
  }

  .ribbon-tabs .active {
    background: #f3f4f6;
    color: var(--blue);
  }

  .help {
    display: flex;
    margin-left: auto;
    padding-right: 4px;
  }

  .help button {
    height: 34px;
    padding: 0;
    margin-left: 21px;
  }

  .ribbon {
    display: flex;
    flex: none;
    height: 126px;
    padding-top: 4px;
    background: #f0f0f0;
    border-top: 1px solid #fafcff;
    border-bottom: 1px solid #3a5574;
    overflow: hidden;
    color: #1a1a1a;
  }

  .group {
    flex: none;
    height: 119px;
    box-sizing: border-box;
    border-right: 1px solid #c8c8c8;
    display: flex;
    flex-direction: column;
  }

  .body {
    height: 103px;
  }

  .row {
    display: flex;
  }

  .caption {
    line-height: 16px;
    text-align: center;
  }

  .on {
    background: #c8c8c8;
    outline: 1px solid #bdbdbd;
    outline-offset: -1px;
  }

  .orient {
    width: 124px;
  }

  .line {
    display: flex;
    align-items: center;
    height: 33px;
    padding-left: 15px;
    gap: 4px;
  }

  .push {
    margin-left: 6px;
    display: flex;
  }

  .line .thin {
    width: 22px;
  }

  .orient .caption {
    padding-left: 6px;
  }

  .font {
    width: 445px;
  }

  .combos {
    display: flex;
    gap: 2px;
    padding: 13px 0 0 6px;
  }

  .combo {
    position: relative;
    display: block;
    height: 27px;
    color: #aaa;
  }

  .combo select {
    appearance: none;
    box-sizing: border-box;
    width: 100%;
    height: 100%;
    border: 1px solid #c3c3c3;
    border-radius: 0;
    background: #fff;
    padding: 0 3px;
    font: 16px "Liberation Sans", Arial, sans-serif;
    color: #222;
  }

  .combo .caret {
    position: absolute;
    right: 8px;
    top: 12px;
  }

  .family {
    width: 203px;
  }

  .size {
    width: 91px;
  }

  .unit {
    width: 69px;
  }

  .narrow-w,
  .wide-w {
    width: 32px;
    font: bold 16px "Liberation Serif", serif;
    color: #555;
  }

  .wide-w {
    font-size: 20px;
    color: #333;
  }

  .formats {
    display: flex;
    gap: 1px;
    padding: 13px 0 0 4px;
  }

  .formats button {
    width: 36px;
    height: 33px;
  }

  .formats .thin {
    width: 12px;
  }

  .formats .gap {
    margin-left: 9px;
  }

  .formats .para {
    margin-left: 6px;
  }

  .serif {
    font: bold 18px "Liberation Serif", serif;
  }

  .italic {
    font-style: italic;
  }

  .underline {
    text-decoration: underline;
  }

  .strike {
    text-decoration: line-through;
    font-size: 16px;
  }

  .big {
    flex-direction: column;
    justify-content: flex-start;
    height: 103px;
    padding-top: 4px;
  }

  .big span {
    margin: 6px 0 12px;
  }

  .big span i {
    display: inline-flex;
    margin-left: 2px;
    vertical-align: 3px;
  }

  .annotation {
    width: 591px;
  }

  .select {
    width: 54px;
    margin: 0 9px 0 8px;
  }

  .dimension {
    width: 80px;
    margin-right: 7px;
  }

  .note {
    width: 61px;
    margin-right: 9px;
  }

  .tools {
    display: grid;
    grid-template-columns: 38px 38px 16px 40px 36px 18px 38px;
    grid-auto-rows: 33px;
    height: 99px;
    border-right: 1px solid #c8c8c8;
    padding-top: 1px;
  }

  .track-small {
    width: 40px;
    height: 36px;
  }

  .track {
    width: 93px;
  }

  .track span,
  .markup .big span {
    line-height: 19px;
  }

  .annotation .caption {
    position: relative;
    padding-right: 20px;
  }

  .launcher {
    position: absolute;
    right: 9px;
    top: 1px;
  }

  .views {
    width: 80px;
  }

  .view-tools {
    display: grid;
    grid-template-columns: 37px 37px;
    grid-auto-rows: 33px;
    padding: 1px 0 0 2px;
  }

  .symbols {
    width: 96px;
  }

  .symbols .big,
  .markup .big {
    width: 100%;
  }

  .setup {
    width: 342px;
  }

  .format {
    width: 72px;
  }

  .orientation {
    width: 90px;
  }

  .page {
    width: 62px;
    border-right: 1px solid #c8c8c8;
  }

  .setup .big {
    height: 96px;
  }

  .setup .big span {
    margin-bottom: 8px;
  }

  .scale {
    width: 97px;
    padding: 25px 0 0 14px;
  }

  .setup .caption {
    padding-left: 4px;
  }

  .markup {
    width: 99px;
  }

  .workspace {
    display: flex;
    flex: 1;
    min-height: 0;
  }

  aside {
    width: 358px;
    flex: none;
    display: flex;
    flex-direction: column;
    padding: 4px 6px 4px 0;
    background: #fbfcff;
  }

  .panel-title {
    display: flex;
    justify-content: space-between;
    align-items: center;
    height: 30px;
    box-sizing: border-box;
    padding: 2px 4px 0 6px;
    background: #f5f6fb;
    flex: none;
  }

  .tree-wrap {
    display: flex;
    height: 184px;
    padding-top: 4px;
    background: #fff;
    flex: none;
  }

  .tree {
    flex: 1;
    list-style: none;
    margin: 0;
    padding: 0;
    overflow: hidden;
  }

  .tree li {
    display: flex;
    align-items: center;
    height: 22px;
    white-space: nowrap;
  }

  .tree svg:first-child {
    margin-right: 5px;
  }

  .tree input {
    appearance: none;
    box-sizing: border-box;
    width: 13px;
    height: 13px;
    margin: 0 3px 0 2px;
    border: 1px solid #555;
    background: #fff;
    flex: none;
  }

  .tree input:checked::before {
    content: "✔";
    display: block;
    font: 11px/11px "DejaVu Sans", sans-serif;
    color: #111;
  }

  .tree .icon {
    margin-right: 7px;
  }

  .strong {
    font-weight: bold;
    color: #111;
  }

  .scrollbar {
    width: 24px;
    box-sizing: border-box;
    display: flex;
    flex-direction: column;
    align-items: center;
    padding: 10px 0 8px;
    background: #f0f0f0;
    flex: none;
  }

  .thumb {
    width: 24px;
    background: #cdcdcd;
    margin: 8px 0 auto;
    height: 39px;
  }

  .lower {
    margin-left: 2px;
  }

  .lower .thumb {
    height: 56px;
  }

  .panel-tabs {
    display: flex;
    padding-left: 6px;
    height: 35px;
    background: #f8f9fd;
    flex: none;
  }

  .panel-tabs button {
    padding: 2px 6px 0;
    height: 34px;
    border: solid transparent;
    border-width: 0 1px;
  }

  .panel-tabs .active {
    color: #3d6e99;
    background: #f0f0f2;
    border-color: #2f5f8a;
  }

  .options {
    margin-top: 8px;
  }

  .blank {
    flex: 1;
    background: #fff;
  }

  .props {
    display: flex;
    height: 162px;
    margin: 0 -1px 0 2px;
    border: 1px solid #8c8f94;
    background: #fff;
    overflow: hidden;
    flex: none;
  }

  .prop-rows {
    flex: 1;
    padding-top: 1px;
    overflow: hidden;
  }

  .category {
    display: flex;
    align-items: center;
    height: 22px;
    padding-left: 5px;
    gap: 11px;
    font-size: 17px;
    font-weight: bold;
    color: #111;
    background: #e2e2e6;
  }

  .prop {
    display: grid;
    grid-template-columns: 134px 1fr;
    height: 22px;
    box-sizing: border-box;
    border-left: 21px solid #e2e2e6;
    border-bottom: 1px solid #dcdce0;
  }

  .prop span {
    padding: 1px 0 0 5px;
  }

  .prop.selected span {
    background: #e2e2e6;
  }

  .prop input {
    width: 100%;
    border: 0;
    border-left: 1px solid #dcdce0;
    padding: 0;
    box-sizing: border-box;
    background: #fff;
  }

  main {
    flex: 1;
    min-width: 0;
    display: flex;
    flex-direction: column;
    padding: 7px 2px 0 2px;
  }

  .canvas {
    position: relative;
    flex: 1;
    min-height: 0;
    display: flex;
    justify-content: center;
    background: #808080;
    border: 1px solid #b5b196;
    padding: 3px 0 2px;
  }

  .sheet {
    height: 100%;
    overflow: visible;
    font-family: "Liberation Sans", Arial, sans-serif;
  }

  .sheet text {
    white-space: pre;
  }

  .watermark {
    font: 68px "Liberation Serif", serif;
    fill: #fff;
    filter: drop-shadow(2px 2px 0 #777);
  }

  .watermark .han {
    font: 300 75px "Noto Sans CJK SC", sans-serif;
  }

  .parts {
    width: 209px;
    border-collapse: collapse;
    table-layout: fixed;
    font: 12px/14px "Liberation Sans", Arial, sans-serif;
    color: #000;
  }

  .parts tr {
    height: 22px;
  }

  .parts tbody tr:nth-child(even) {
    height: 21px;
  }

  .parts th,
  .parts td {
    border: 1px solid #000;
    padding: 0;
    font-weight: normal;
    text-align: center;
  }

  .parts th:nth-child(1) {
    width: 67px;
  }

  .parts th:nth-child(3) {
    width: 37px;
  }

  .parts td:nth-child(2),
  .parts th:nth-child(2) {
    text-align: left;
    padding-left: 3px;
  }

  .hint {
    position: absolute;
    left: 16px;
    top: 13px;
    margin: 0;
    font-size: 20px;
    color: #333;
  }

  .brand {
    position: absolute;
    right: 10px;
    top: 8px;
    display: flex;
    flex-direction: column;
    align-items: flex-end;
    font-family: "Open Sans", sans-serif;
    color: #2e2e2e;
  }

  .brand strong {
    font-size: 38px;
    line-height: 40px;
  }

  .brand b {
    font-size: 18px;
    line-height: 20px;
  }

  .brand hr {
    width: 110px;
    margin: 3px 0;
    border: 0;
    border-top: 2px solid #444;
  }

  .brand em {
    font-style: normal;
    font-weight: bold;
    font-size: 19px;
    line-height: 24px;
    padding-right: 15px;
  }

  .doc-tabs {
    display: flex;
    height: 37px;
    margin-top: 4px;
    border-top: 1px solid #7c7f86;
    border-left: 1px solid #7c7f86;
    background: #f8f9fd;
    flex: none;
    margin-left: -2px;
    color: #111;
  }

  .doc-tabs > button {
    width: 208px;
    height: 34px;
    justify-content: flex-start;
    gap: 6px;
    padding-left: 6px;
  }

  .doc {
    display: flex;
    align-items: center;
    gap: 4px;
    height: 31px;
    padding: 0 8px 0 3px;
    border: solid #2f5f8a;
    border-width: 0 1px 2px;
    color: #2c5c87;
    font-weight: bold;
  }

  .doc-nav {
    display: flex;
    gap: 10px;
    margin-left: auto;
    padding: 0 0 6px;
  }

  footer {
    display: flex;
    height: 43px;
    background: var(--blue);
    color: #fff;
    flex: none;
  }

  .message {
    width: 917px;
    padding: 15px 0 0 12px;
  }

  .cell {
    margin-top: 7px;
    border-left: 1px solid #7f9db8;
    box-sizing: border-box;
  }

  .wide {
    width: 153px;
  }

  .info {
    width: 55px;
    gap: 7px;
  }

  .last {
    width: 152px;
  }

  .rest {
    flex: 1;
  }

  .tray {
    display: flex;
    gap: 12px;
    padding: 7px 20px 0 0;
  }

  .tray button {
    gap: 7px;
  }

  .tray .line-left {
    border-left: 1px solid #7f9db8;
    padding-left: 6px;
    margin-left: -6px;
  }
</style>
